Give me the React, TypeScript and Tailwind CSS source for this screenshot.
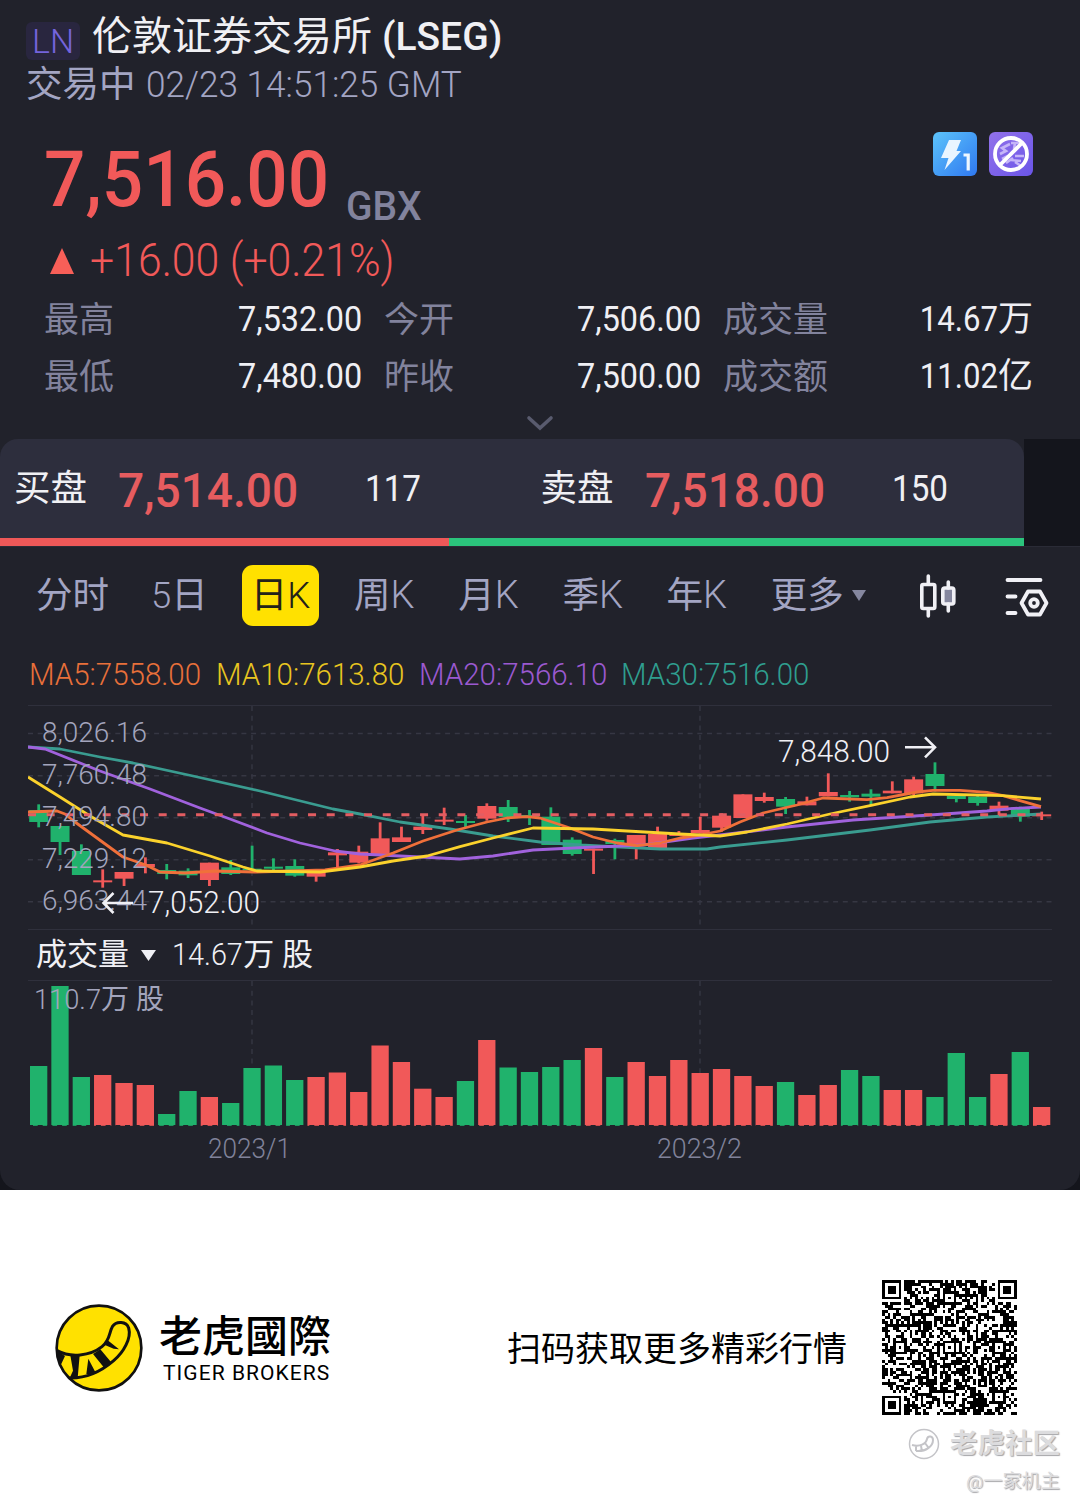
import React from "react";

type Tone = "up" | "down";

const UP = "#f15959";
const DOWN = "#20b26c";
const STEP = 21.34;

// [high, body top, body bottom, low, direction] in thirds of a pixel below y=700
const candles: [number, number, number, number, Tone][] = [
  [313, 330, 366, 382, "down"],
  [378, 378, 426, 465, "down"],
  [433, 453, 525, 525, "down"],
  [508, 541, 547, 563, "up"],
  [516, 516, 536, 558, "up"],
  [472, 492, 502, 520, "up"],
  [492, 510, 522, 538, "down"],
  [505, 512, 526, 534, "down"],
  [488, 488, 540, 558, "up"],
  [480, 502, 522, 525, "down"],
  [437, 506, 511, 511, "down"],
  [475, 500, 506, 512, "down"],
  [478, 498, 527, 530, "down"],
  [512, 516, 530, 545, "up"],
  [447, 457, 466, 502, "up"],
  [437, 455, 488, 490, "up"],
  [367, 415, 468, 468, "up"],
  [380, 412, 426, 426, "up"],
  [342, 380, 390, 402, "up"],
  [323, 359, 365, 375, "up"],
  [345, 363, 369, 383, "down"],
  [310, 318, 356, 362, "up"],
  [300, 321, 352, 366, "down"],
  [330, 345, 351, 375, "down"],
  [322, 350, 435, 435, "down"],
  [412, 419, 462, 467, "down"],
  [446, 446, 452, 522, "up"],
  [416, 420, 432, 478, "down"],
  [405, 405, 435, 478, "up"],
  [380, 402, 445, 445, "up"],
  [393, 400, 408, 408, "up"],
  [350, 390, 400, 400, "up"],
  [340, 347, 383, 395, "up"],
  [283, 283, 354, 354, "up"],
  [278, 291, 303, 308, "up"],
  [291, 297, 320, 342, "down"],
  [290, 304, 316, 316, "up"],
  [220, 276, 289, 289, "up"],
  [273, 285, 292, 305, "down"],
  [268, 281, 290, 318, "down"],
  [244, 272, 280, 280, "up"],
  [230, 238, 280, 285, "up"],
  [187, 222, 258, 275, "down"],
  [285, 288, 297, 307, "down"],
  [288, 290, 309, 317, "down"],
  [305, 317, 332, 345, "up"],
  [320, 322, 350, 365, "down"],
  [335, 343, 349, 360, "up"],
];

const volumeTops = [
  1066, 986, 1077, 1075, 1083, 1085, 1114, 1091, 1097, 1103, 1068, 1065.5,
  1080, 1077, 1072.5, 1092, 1045.5, 1062, 1088.7, 1097, 1081, 1040, 1067.5,
  1072, 1067, 1060, 1048, 1077, 1062, 1076, 1060, 1073, 1069, 1076, 1086,
  1082, 1095, 1085, 1070, 1076, 1090, 1090, 1097, 1053, 1097, 1074, 1052, 1107,
];

const averages = [
  {
    label: "MA30:7516.00",
    text: "text-[#2f9e8f]",
    stroke: "#3a9c90",
    points:
      "28,747 60,749 100,757 133,763 193,776 260,791 333,809 360,814 400,822 450,829 493,836 540,842 580,845 640,848 660,849 707,849 720,847 787,840 870,830 930,822 987,817 1041,814",
  },
  {
    label: "MA20:7566.10",
    text: "text-[#9b59d0]",
    stroke: "#a162dd",
    points:
      "28,747 45,749 100,771 150,789 200,808 230,819 267,833 300,843 335,851 360,854 420,857 460,859 493,856 533,850 573,848 643,845 693,838 720,835 787,827 853,820 930,815 987,811 1010,808.6 1041,807",
  },
  {
    label: "MA5:7558.00",
    text: "text-[#e8703a]",
    stroke: "#f0703a",
    points:
      "28,812 57,811 65,814 75,822 123,857 146,865 160,872 185,873 215,871 255,872 325,870 360,865 393,853 423,841 457,830 487,822 507,818 527,816.7 540,818 570,828 593,837 617,843 637,845.7 660,843 680,838 700,835 720,831 740,822 763,813 797,805 823,798 867,799.7 887,797.7 917,792 933,790.3 960,790.3 987,792.3 1003,795.7 1041,806.7",
  },
  {
    label: "MA10:7613.80",
    text: "text-[#e8c520]",
    stroke: "#fbd22c",
    points:
      "28,777 60,797 90,816 123,835 167,843 210,856 243,867 257,871 320,872 360,867 393,861 427,856 460,846.7 493,838 533,828 593,829 627,831 680,834 720,836 747,832 787,824 830,814 870,805.7 910,797 933,794 1003,795.7 1041,799",
  },
];

const legendOrder = [2, 3, 1, 0];

const axis = [
  { y: 733.5, label: "8,026.16" },
  { y: 775.8, label: "7,760.48" },
  { y: 817.8, label: "7,494.80" },
  { y: 859.8, label: "7,229.12" },
  { y: 901.8, label: "6,963.44" },
];

const stats = [
  { label: "最高", value: "7,532.00" },
  { label: "今开", value: "7,506.00" },
  { label: "成交量", value: "14.67", unit: "万" },
  { label: "最低", value: "7,480.00" },
  { label: "昨收", value: "7,500.00" },
  { label: "成交额", value: "11.02", unit: "亿" },
];

const FONT = "Roboto, 'Noto Sans CJK SC', sans-serif";

function Header() {
  return (
    <header className="px-[26px] pt-[13px]">
      <div className="flex h-12 items-center gap-3">
        <span className="mt-2 flex h-[38px] w-[54px] items-center justify-center rounded-md bg-[#29263f] text-[34px] font-light leading-none text-[#7464dc]">
          LN
        </span>
        <h1 className="whitespace-nowrap text-[40px] leading-[50px] text-[#f0f0f4]">
          伦敦证券交易所 <span className="text-[39px] font-medium">(LSEG)</span>
        </h1>
      </div>
      <p className="flex h-[47px] whitespace-nowrap text-[37px] leading-[48px] text-[#a3a5c3]">
        <span className="mr-2.5 w-[110px] text-[36.5px]">交易中</span>
        <span className="origin-left scale-x-[0.95] font-light">02/23 14:51:25 GMT</span>
      </p>
    </header>
  );
}

function Badges() {
  return (
    <div className="flex gap-3">
      <svg width="44" height="44" viewBox="0 0 44 44">
        <defs>
          <linearGradient id="blue" x1="0" y1="0" x2="1" y2="1">
            <stop offset="0" stopColor="#5cc4fb" />
            <stop offset="1" stopColor="#2f78f0" />
          </linearGradient>
        </defs>
        <rect width="44" height="44" rx="6" fill="url(#blue)" />
        <path d="M16 8h12l-4.500 11h4.500L11.500 38l4-12H8z" fill="#e9f5ff" />
        <path d="M30.5 23h4.700V38.5" fill="none" stroke="#eef7ff" strokeWidth="3.2" />
      </svg>
      <svg width="44" height="44" viewBox="0 0 44 44">
        <defs>
          <linearGradient id="violet" x1="0" y1="0" x2="1" y2="1">
            <stop offset="0" stopColor="#9272ea" />
            <stop offset="1" stopColor="#6a55e8" />
          </linearGradient>
        </defs>
        <rect width="44" height="44" rx="6" fill="url(#violet)" />
        <path
          d="M21 12l-8 4 4 3-6 3M22 11h10M26 11l-1 6M13 27l6-3M17 31l7-5M26 24h9M22 28l10 1M26 30l6 4"
          fill="none"
          stroke="#c5b5f8"
          strokeWidth="2.6"
        />
        <circle cx="22" cy="22" r="16" fill="none" stroke="#fff" strokeWidth="3.8" />
        <path d="M33 11L11 33" stroke="#fff" strokeWidth="3.8" />
      </svg>
    </div>
  );
}

function Quote() {
  return (
    <section>
      <div className="mt-[24px] flex justify-between pl-11 pr-[47px]">
        <div className="mt-[8px] flex h-[79px] items-end">
          <span className="w-[302px] origin-left scale-x-[0.935] text-[78px] font-medium leading-[79px] text-[#f15959]">
            7,516.00
          </span>
          <span className="origin-left scale-x-95 text-[41px] font-medium leading-[26px] text-[#82839d]">GBX</span>
        </div>
        <Badges />
      </div>
      <div className="mt-4 flex h-[51px] items-center gap-4 pl-[50px] text-[#f15959]">
        <svg width="24" height="26" viewBox="0 0 24 26">
          <path d="M12 0l12 26H0z" fill="#f85f58" />
        </svg>
        <span className="origin-left scale-x-[0.93] text-[46px] font-light leading-[53px]">+16.00 (+0.21%)</span>
      </div>
      <dl className="mt-[5px] grid grid-cols-[318px_317px_308px] gap-x-[22px] pl-11 text-[35px] leading-[57px]">
        {stats.map(({ label, value, unit }) => (
          <div key={label} className="flex justify-between whitespace-nowrap">
            <dt className="relative top-px text-[#82839d]">{label}</dt>
            <dd className={unit ? "-mr-0.5 flex text-[#efeff4]" : "text-[#efeff4]"}>
              <span className={unit ? "origin-right scale-x-[0.89]" : "inline-block origin-right scale-x-[0.925]"}>
                {value}
              </span>
              {unit}
            </dd>
          </div>
        ))}
      </dl>
      <div className="flex h-[34px] items-center justify-center">
        <svg width="28" height="18" viewBox="0 0 28 18" className="mt-1">
          <path d="M3 3l11 10L25 3" fill="none" stroke="#595b6e" strokeWidth="3.6" strokeLinecap="round" />
        </svg>
      </div>
    </section>
  );
}

function OrderSide({ name, price, size }: { name: string; price: string; size: string }) {
  return (
    <div className="flex h-[99px] w-[526.5px] shrink-0 items-center whitespace-nowrap">
      <span className="w-[118px] pl-[14px] pt-0.5 text-[36.5px] text-[#f0f0f4]">{name}</span>
      <span className="mt-[5px] w-[247px] origin-left scale-x-[0.94] text-[49px] font-medium leading-[60px] text-[#e65c5f]">
        {price}
      </span>
      <span className="mt-0.5 origin-left scale-x-[0.91] text-[36.5px] text-[#f0f0f4]">{size}</span>
    </div>
  );
}

function OrderBook() {
  return (
    <section className="h-[107px] bg-[#14151c]">
      <div className="h-full w-[1024px] bg-[#21222b]">
        <div className="overflow-hidden rounded-t-[18px] bg-[#2d2e3d]">
          <div className="flex">
            <OrderSide name="买盘" price="7,514.00" size="117" />
            <OrderSide name="卖盘" price="7,518.00" size="150" />
          </div>
        </div>
        <div className="flex h-2">
          <div className="w-[449px] bg-[#ee5858]" />
          <div className="flex-1 bg-[#2bc47c]" />
        </div>
      </div>
    </section>
  );
}

function Tabs() {
  return (
    <nav className="flex h-[109px] items-start border-t border-[#2a2b36] pl-[36px] pt-[18px] text-[36.5px] text-[#a3a5c3]">
      <div className="flex h-[61px] items-center whitespace-nowrap leading-[61px]">
        <span className="w-[115px]">分时</span>
        <span className="w-[91px]">
          <span className="font-light">5</span>日
        </span>
        <span className="mr-[35px] flex h-[61px] w-[77px] items-center justify-center rounded-[11px] bg-[#ffe100] text-[#24221a]">
          日<span className="font-light">K</span>
        </span>
        {["周", "月", "季", "年"].map((unit) => (
          <span key={unit} className="w-[104.2px]">
            {unit}
            <span className="text-[38px] font-light">K</span>
          </span>
        ))}
        <span>更多</span>
        <svg width="16" height="11" viewBox="0 0 16 11" className="ml-[7px]">
          <path d="M1 0h14L8 11z" fill="#85879f" />
        </svg>
        <svg width="40" height="44" viewBox="0 0 40 44" className="ml-[52px]" fill="none" stroke="#f0f0f5" strokeWidth="3.6" strokeLinecap="round">
          <rect x="2.8" y="10.5" width="13" height="24" rx="1.5" />
          <path d="M9.3 2v8M9.3 35v7" />
          <rect x="23.8" y="14" width="11" height="16" rx="2" fill="#85879f" />
          <path d="M29.3 8v6M29.3 30v7" />
        </svg>
        <svg width="44" height="40" viewBox="0 0 44 40" className="ml-[46px] mt-0.5" fill="none" stroke="#f0f0f5" strokeWidth="3.8" strokeLinecap="round">
          <path d="M2.5 3h33M2.5 19.5h8M2.5 36h8" />
          <path d="M23 14.5h12l6.5 11.5-6.5 11.5H23L16.5 26z" strokeLinejoin="round" />
          <circle cx="29" cy="26" r="3.8" />
        </svg>
      </div>
    </nav>
  );
}

function PriceChart() {
  return (
    <svg viewBox="28 705 1024 225" className="mx-7 block h-[225px] w-[1024px]" fontFamily={FONT}>
      <g stroke="#2f303c">
        <path d="M28 705.5H1052M28 929.5H1052" />
        <g strokeDasharray="5 4.7" strokeWidth="1.4" stroke="#363743">
          {axis.map((a) => (
            <path key={a.label} d={`M28 ${a.y}H1052`} />
          ))}
          <path d="M252 706V929M700 706V929" />
        </g>
      </g>
      {candles.map(([high, top, bottom, low, tone], i) => {
        const x = 38.7 + i * STEP;
        const fill = tone === "up" ? UP : DOWN;
        return (
          <g key={i} fill={fill}>
            <rect x={x - 1.4} y={700 + high / 3} width="2.8" height={(low - high) / 3} />
            <rect x={x - 9.5} y={700 + top / 3} width="19" height={(bottom - top) / 3} />
          </g>
        );
      })}
      {averages.map((ma) => (
        <polyline key={ma.label} points={ma.points} fill="none" stroke={ma.stroke} strokeWidth="2.8" strokeLinejoin="round" />
      ))}
      <path d="M28 814.7H1041" stroke="#e35d62" strokeWidth="3" strokeDasharray="8 10.67" />
      <g fill="#a3a5bd" fontSize="28.5" fontWeight="300">
        {axis.map((a) => (
          <text key={a.label} x="42" y={a.y + 8.2} textLength="105" lengthAdjust="spacingAndGlyphs">
            {a.label}
          </text>
        ))}
      </g>
      <g fill="#f0f0f5" fontSize="30.5" fontWeight="300">
        <text x="148" y="913" textLength="112" lengthAdjust="spacingAndGlyphs">
          7,052.00
        </text>
        <text x="778" y="762" textLength="112" lengthAdjust="spacingAndGlyphs">
          7,848.00
        </text>
      </g>
      <g fill="none" stroke="#f0f0f5" strokeWidth="2.6">
        <path d="M133 903H104M113.5 893L103.5 903L113.5 913" />
        <path d="M905 747.3H934M925 737.3L935 747.3L925 757.3" />
      </g>
    </svg>
  );
}

function VolumeChart() {
  return (
    <svg viewBox="28 980 1024 190" className="mx-7 block h-[190px] w-[1024px]" fontFamily={FONT}>
      <path d="M28 980.5H1052" stroke="#2f303c" />
      <path d="M252 981V1126M700 981V1126" stroke="#363743" strokeWidth="1.4" strokeDasharray="5 4.7" />
      {volumeTops.map((top, i) => (
        <rect
          key={i}
          x={30 + i * STEP}
          y={top}
          width="17.3"
          height={1125.8 - top}
          fill={candles[i][4] === "up" ? UP : DOWN}
        />
      ))}
      <path d="M28 1125.5H1052" stroke="#21222b" strokeWidth="1" strokeDasharray="5 4.7" />
      <g fontSize="28">
        <text x="34" y="1009" fill="#a3a5bd" fontWeight="300" textLength="67" lengthAdjust="spacingAndGlyphs">
          110.7
        </text>
        <text x="101" y="1009" fill="#a3a5bd" textLength="63" lengthAdjust="spacingAndGlyphs">
          万 股
        </text>
        <text x="208" y="1158" fill="#80829a" fontWeight="300" textLength="83" lengthAdjust="spacingAndGlyphs">
          2023/1
        </text>
        <text x="657" y="1158" fill="#80829a" fontWeight="300" textLength="85" lengthAdjust="spacingAndGlyphs">
          2023/2
        </text>
      </g>
    </svg>
  );
}

function TigerMark() {
  return (
    <svg width="90" height="90" viewBox="71 67 270 270">
      <circle cx="206" cy="202" r="127" fill="#ffe100" stroke="#111" strokeWidth="8" />
      <path
        d="M80 210C120 232 180 226 215 198C240 178 236 155 246 138C258 120 288 122 295 142C304 172 280 215 250 240C215 270 170 294 116 292"
        fill="none"
        stroke="#111"
        strokeWidth="9"
      />
      <path
        d="M78 208L104 226L90 256L84 240zM120 224H148L142 292H118L128 270zM174 234L198 280H168zM188 220L210 206L242 244L222 262zM222 192L234 180L266 206L250 204z"
        fill="#111"
      />
    </svg>
  );
}

const QR_SIZE = 49;

function qrModules() {
  const grid: boolean[][] = [];
  let seed = 8;
  for (let y = 0; y < QR_SIZE; y++) {
    grid.push([]);
    for (let x = 0; x < QR_SIZE; x++) {
      seed = (seed * 16807) % 2147483647;
      grid[y].push(seed / 2147483647 < 0.54);
    }
  }
  for (let i = 8; i < QR_SIZE - 8; i++) {
    grid[6][i] = i % 2 === 0;
    grid[i][6] = i % 2 === 0;
  }
  const ring = (cx: number, cy: number, reach: number, light: number[]) => {
    for (let dy = -reach; dy <= reach; dy++) {
      for (let dx = -reach; dx <= reach; dx++) {
        const x = cx + dx;
        const y = cy + dy;
        if (x < 0 || y < 0 || x >= QR_SIZE || y >= QR_SIZE) continue;
        grid[y][x] = !light.includes(Math.max(Math.abs(dx), Math.abs(dy)));
      }
    }
  };
  for (const [x, y] of [[24, 6], [6, 24], [24, 24], [42, 24], [24, 42], [42, 42]]) ring(x, y, 2, [1]);
  for (const [x, y] of [[3, 3], [45, 3], [3, 45]]) ring(x, y, 4, [2, 4]);
  return grid;
}

function QrCode() {
  const d = qrModules()
    .flatMap((row, y) => row.map((on, x) => (on ? `M${x} ${y}h1v1h-1z` : "")))
    .join("");
  return (
    <svg width="135" height="135" viewBox="0 0 49 49" shapeRendering="crispEdges">
      <path d={d} fill="#000" />
    </svg>
  );
}

function Footer() {
  return (
    <footer className="relative h-[316px] bg-white text-black">
      <div className="flex items-center pl-[54px] pt-[90px]">
        <TigerMark />
        <div className="ml-[15px] w-[180px] whitespace-nowrap pt-0.5">
          <div className="text-[43px] font-medium leading-[52px]">老虎國際</div>
          <div className="-mt-0.5 ml-1 text-[21px] leading-[25px] tracking-[1.05px]">TIGER BROKERS</div>
        </div>
        <p className="ml-[168px] w-[375px] whitespace-nowrap pt-0.5 text-[34px] leading-[40px]">扫码获取更多精彩行情</p>
        <QrCode />
      </div>
      <div className="absolute right-5 top-[236px] text-right text-[#dcdcde] [text-shadow:1px_1px_1px_#a5a5a8]">
        <div className="flex items-center gap-2.5 text-[27.5px] font-bold leading-[36px]">
          <svg width="32" height="32" viewBox="0 0 32 32" fill="none" stroke="#c4c4c8" strokeWidth="1.5">
            <circle cx="16" cy="16" r="14.5" />
            <path d="M4 17c8 2 14-1 15-6 1-4 6-3 6 1 0 6-7 12-17 11M8 18v5M13 18l1 5M17 15l3 4" strokeWidth="2" />
          </svg>
          老虎社区
        </div>
        <div className="mt-[5px] text-[19.2px] leading-[30px]">@一家机主</div>
      </div>
    </footer>
  );
}

export default function App() {
  return (
    <main className="h-[1506px] w-[1080px] overflow-hidden bg-[#14151c] font-['Roboto','Noto_Sans_CJK_SC',sans-serif]">
      <div className="h-[1190px] rounded-b-[20px] bg-[#21222b]">
        <Header />
        <Quote />
        <OrderBook />
        <Tabs />
        <div className="flex h-[50px] pl-[29px] text-[32px] font-light leading-[39px]">
          {legendOrder.map((i) => (
            <span key={i} className="w-[202.6px] first:w-[187px]">
              <span className={`inline-block origin-left scale-x-[0.922] ${averages[i].text}`}>{averages[i].label}</span>
            </span>
          ))}
        </div>
        <PriceChart />
        <div className="flex h-[50px] items-center whitespace-nowrap pl-9 text-[31px] leading-[50px] text-[#f0f0f5]">
          成交量
          <svg width="15" height="11" viewBox="0 0 15 11" className="ml-3 mr-4">
            <path d="M0 0h15L7.5 11z" fill="#f0f0f5" />
          </svg>
          <span className="-mr-[5px] origin-left scale-x-[0.93] font-light">14.67</span>
          <span>万 股</span>
        </div>
        <VolumeChart />
      </div>
      <Footer />
    </main>
  );
}
